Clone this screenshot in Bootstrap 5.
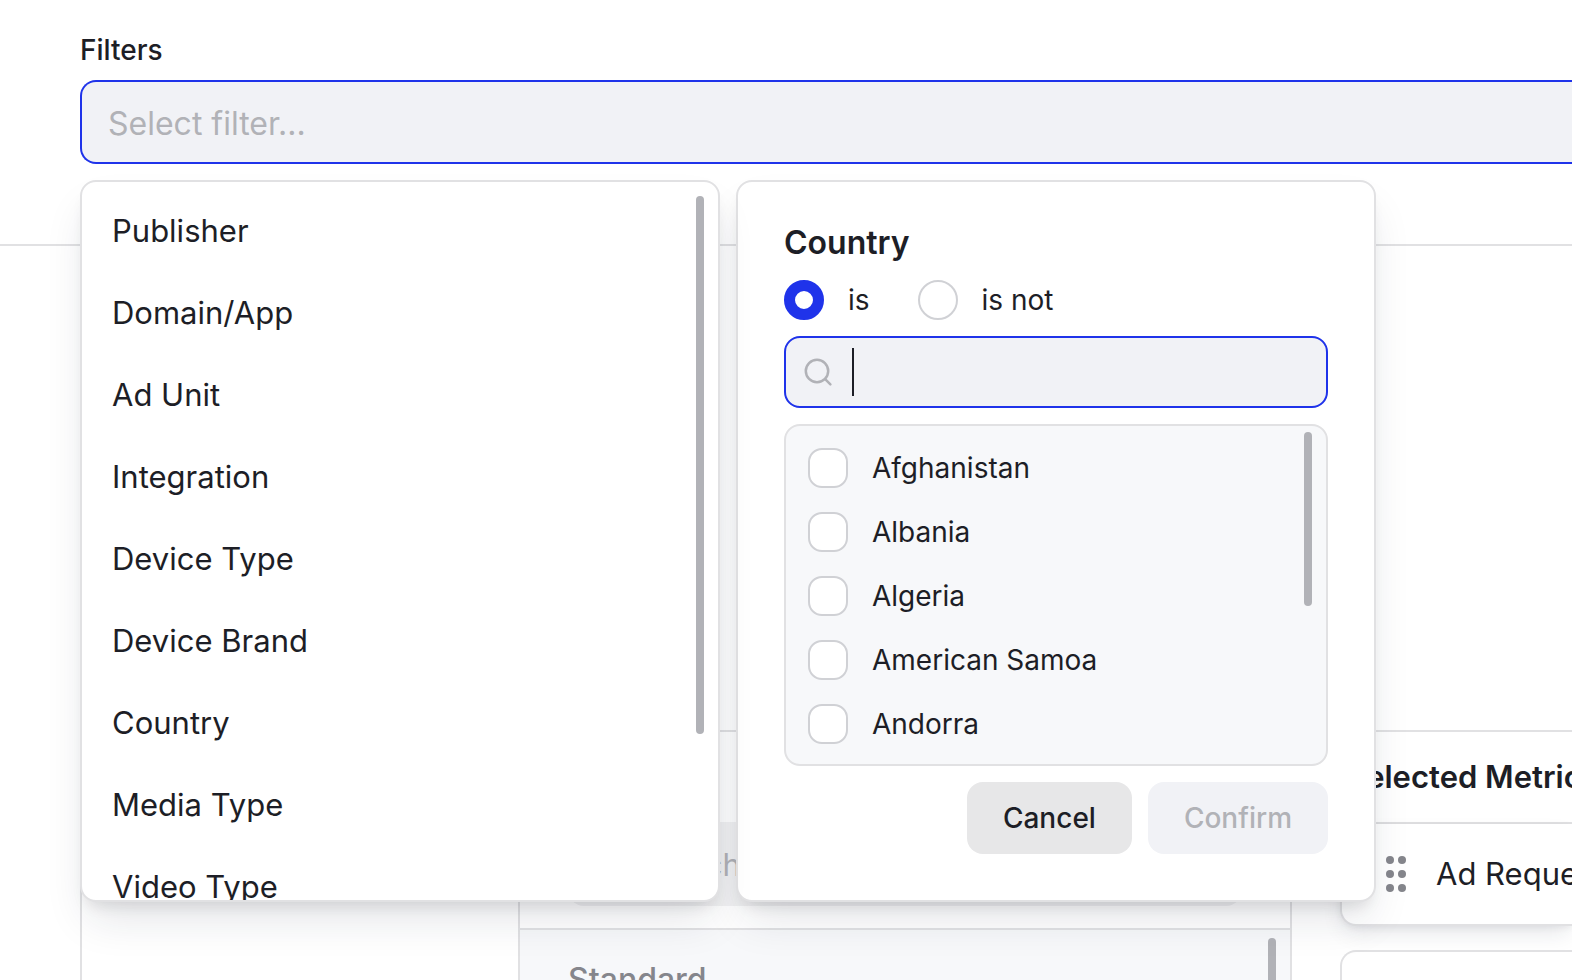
<!DOCTYPE html>
<html lang="en">
<head>
<meta charset="utf-8">
<meta name="viewport" content="width=device-width, initial-scale=1">
<title>Report filters</title>
<link href="https://cdn.jsdelivr.net/npm/bootstrap@5.3.0/dist/css/bootstrap.min.css" rel="stylesheet">
<style>
:root { --ink: #1d1e26; --blue: #1f33ea; --line: #e1e1e3; --muted: #b1b2b7; --fill: #f1f2f6; --pale: #f7f8fa; }
body { font-family: Inter, "Liberation Sans", sans-serif; font-size: 31px; line-height: 40px; color: var(--ink); background: #fff; }
.text-m { font-size: 28px; }
.filter-bar { padding: 30px 0 80px 80px; border-bottom: 2px solid var(--line); }
.filter-label { font-size: 28px; font-weight: 500; margin-bottom: 10px; }
.filter-input { height: 84px; padding: 2px 26px 0; font-size: 32px; background: var(--fill); border: 2px solid var(--blue); border-right: 0; border-radius: 16px 0 0 16px; color: var(--ink); outline: 0; }
input::placeholder { color: var(--muted) !important; opacity: 1; }
.menus { top: calc(100% + 16px); left: 0; gap: 16px; z-index: 5; }
.panel { width: 640px; height: 722px; background: #fff; border: 2px solid var(--line); border-radius: 16px; box-shadow: 0 24px 44px -8px rgba(28,36,60,.12), 0 10px 16px -8px rgba(20,20,20,.14); }
.field-list { padding: 8px 0; }
.field-item { height: 82px; padding: 0 30px; border: 0; background: none; color: var(--ink); }
.thumb { width: 8px; border-radius: 4px; background: var(--muted); }
.thumb-fields { top: 14px; right: 14px; height: 538px; }
.thumb-countries { top: 6px; right: 14px; height: 174px; }
.thumb-metrics { top: 8px; right: 14px; height: 300px; }
.picker { padding: 46px; }
.picker-title { font-weight: 600; font-size: 32px; line-height: 30px; margin: 0 0 22px; }
.tick { appearance: none; width: 40px; height: 40px; margin: 0; background: #fff; border: 2px solid #d0d1d5; flex: none; }
.tick[type=radio] { border-radius: 50%; }
.tick[type=checkbox] { border-radius: 14px; }
.tick[type=radio]:checked { border: 11px solid var(--blue); }
.country-search { height: 72px; margin: 16px 0; padding: 0 18px; gap: 18px; background: var(--fill); border: 2px solid var(--blue); border-radius: 16px; }
.country-search input { min-width: 0; border: 0; outline: 0; background: none; }
.caret { width: 2px; height: 48px; background: var(--ink); }
.countries { height: 342px; padding: 22px; gap: 24px; background: var(--pale); border: 2px solid var(--line); border-radius: 16px; }
.act { height: 72px; padding: 0 36px; border: 0; border-radius: 16px; font-size: 28px; font-weight: 500; }
.act-cancel { background: #e7e7e8; color: var(--ink); }
.act-confirm { background: var(--fill); color: var(--muted); }
.board { display: grid; grid-template-columns: minmax(0, 438fr) minmax(0, 774fr) minmax(0, 280fr); margin: 484px 0 0 80px; height: 600px; }
.dims { border-top: 2px solid var(--line); border-left: 2px solid var(--line); border-radius: 16px 0 0 0; }
.metrics { border: 2px solid var(--line); border-bottom: 0; border-radius: 0 16px 0 0; padding-top: 90px; }
.metric-search { height: 84px; margin: 0 48px 22px; padding: 0 70px; border: 0; border-radius: 16px; background: #f2f2f3; }
.metric-list { border-top: 2px solid var(--line); background: var(--pale); padding: 30px 48px; height: 400px; }
.group-name { font-size: 32px; font-weight: 500; color: #85868c; }
.chosen { margin-left: 48px; }
.chosen-head { height: 94px; padding: 0 4px; font-weight: 600; border: 2px solid var(--line); border-right: 0; border-radius: 16px 0 0 0; }
.chosen-item { height: 102px; padding: 0 42px; gap: 28px; background: #fff; border: 2px solid var(--line); border-top: 0; border-right: 0; border-radius: 0 0 0 16px; box-shadow: 0 10px 22px -4px rgba(28,34,60,.12), 0 2px 6px rgba(20,20,30,.06); }
.chosen-box { height: 300px; margin-top: 24px; background: #fff; border: 2px solid var(--line); border-right: 0; border-radius: 16px 0 0 0; }
</style>
</head>
<body>
<main class="vh-100 overflow-hidden">
  <section class="filter-bar">
    <label class="filter-label d-block" for="filter">Filters</label>
    <div class="position-relative">
      <input id="filter" class="filter-input d-block w-100" type="text" placeholder="Select filter...">
      <div class="menus position-absolute d-flex">
        <div class="panel position-relative">
          <div class="field-list h-100 overflow-hidden d-flex flex-column">
            <button type="button" class="field-item flex-shrink-0 text-start">Publisher</button>
            <button type="button" class="field-item flex-shrink-0 text-start">Domain/App</button>
            <button type="button" class="field-item flex-shrink-0 text-start">Ad Unit</button>
            <button type="button" class="field-item flex-shrink-0 text-start">Integration</button>
            <button type="button" class="field-item flex-shrink-0 text-start">Device Type</button>
            <button type="button" class="field-item flex-shrink-0 text-start">Device Brand</button>
            <button type="button" class="field-item flex-shrink-0 text-start">Country</button>
            <button type="button" class="field-item flex-shrink-0 text-start">Media Type</button>
            <button type="button" class="field-item flex-shrink-0 text-start">Video Type</button>
          </div>
          <div class="thumb thumb-fields position-absolute"></div>
        </div>
        <form class="panel picker">
          <h2 class="picker-title">Country</h2>
          <div class="d-flex align-items-center text-m">
            <input class="tick" type="radio" name="op" id="op-is" checked>
            <label class="ms-4 me-5" for="op-is">is</label>
            <input class="tick" type="radio" name="op" id="op-not">
            <label class="ms-4" for="op-not">is not</label>
          </div>
          <div class="country-search d-flex align-items-center">
            <svg class="flex-shrink-0" width="30" height="30" viewBox="0 0 30 30" fill="none" stroke="#b1b2b7" stroke-width="2.5" stroke-linecap="round" aria-hidden="true"><circle cx="13" cy="14" r="11.2"/><path d="M21.4 22.4l5 5"/></svg>
            <span class="caret flex-shrink-0"></span>
            <input class="flex-grow-1" type="text" aria-label="Search countries">
          </div>
          <div class="countries position-relative overflow-hidden d-flex flex-column text-m">
            <div class="d-flex align-items-center gap-4"><input class="tick" type="checkbox" id="c1"><label for="c1">Afghanistan</label></div>
            <div class="d-flex align-items-center gap-4"><input class="tick" type="checkbox" id="c2"><label for="c2">Albania</label></div>
            <div class="d-flex align-items-center gap-4"><input class="tick" type="checkbox" id="c3"><label for="c3">Algeria</label></div>
            <div class="d-flex align-items-center gap-4"><input class="tick" type="checkbox" id="c4"><label for="c4">American Samoa</label></div>
            <div class="d-flex align-items-center gap-4"><input class="tick" type="checkbox" id="c5"><label for="c5">Andorra</label></div>
            <div class="thumb thumb-countries position-absolute"></div>
          </div>
          <div class="d-flex justify-content-end gap-3 mt-3">
            <button type="button" class="act act-cancel">Cancel</button>
            <button type="submit" class="act act-confirm" disabled>Confirm</button>
          </div>
        </form>
      </div>
    </div>
  </section>

  <section class="board">
    <div class="dims"></div>
    <div class="metrics d-flex flex-column">
      <input class="metric-search" type="search" placeholder="Search" aria-label="Search metrics">
      <div class="metric-list position-relative">
        <div class="group-name">Standard</div>
        <div class="thumb thumb-metrics position-absolute"></div>
      </div>
    </div>
    <div class="chosen text-nowrap">
      <div class="chosen-head d-flex align-items-center">Selected Metrics</div>
      <div class="chosen-item d-flex align-items-center">
        <svg class="flex-shrink-0" width="24" height="36" viewBox="0 0 24 36" fill="#85868c" aria-hidden="true"><circle cx="6" cy="4" r="4"/><circle cx="18" cy="4" r="4"/><circle cx="6" cy="18" r="4"/><circle cx="18" cy="18" r="4"/><circle cx="6" cy="32" r="4"/><circle cx="18" cy="32" r="4"/></svg>
        <span>Ad Requests</span>
      </div>
      <div class="chosen-box"></div>
    </div>
  </section>
</main>
<script src="https://cdn.jsdelivr.net/npm/bootstrap@5.3.0/dist/js/bootstrap.bundle.min.js"></script>
</body>
</html>
